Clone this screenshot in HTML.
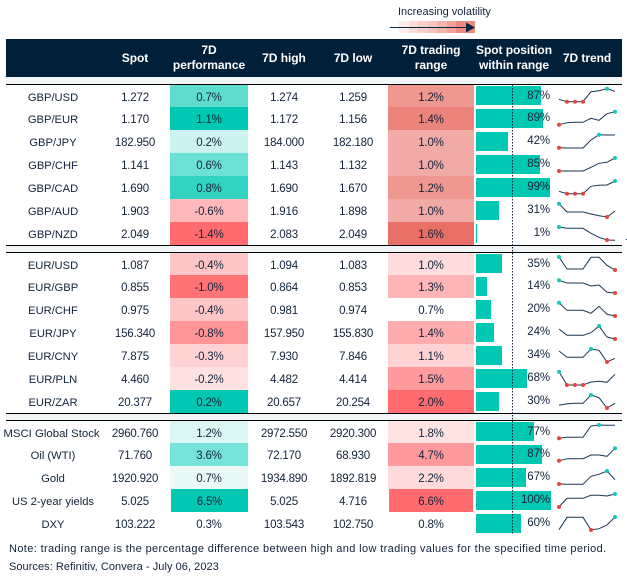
<!DOCTYPE html>
<html><head><meta charset="utf-8"><style>
html,body{margin:0;padding:0;background:#fff}
body{width:627px;height:576px;position:relative;overflow:hidden;font-family:"Liberation Sans",sans-serif;font-size:11.5px;letter-spacing:-.2px;color:#13233a}
.abs,.r,.r>*{position:absolute}
.r{left:0;width:627px;height:23px;line-height:27px}
.r.s{height:22px}
.r>*{top:0;height:100%;text-align:center}
.a{left:0;width:106px;font-size:11.2px;letter-spacing:0}
.b{left:100px;width:70px}
.c{left:170px;width:78px}
.d{left:248px;width:72px}
.e{left:318px;width:70px}
.f{left:388px;width:86px}
.r>.g{left:476px;top:2px;height:19px;background:#00c8b3}
.r.s>.g{top:1px}
.r>.h{left:500px;width:50px;text-align:right;line-height:23px;font-size:11.5px;letter-spacing:-.1px}
.r.s>.h{line-height:22px}
.hd{position:absolute;top:39px;height:38px;color:#fff;font-weight:bold;font-size:12px;letter-spacing:-.05px;line-height:15px;text-align:center;display:flex;align-items:center;justify-content:center}
.ln{position:absolute;left:6px;width:616px;height:1px;background:#000}
.st{position:absolute;left:6px;width:616px;background:#f2f5f6}
svg{position:absolute;left:0;top:0}
polyline{fill:none;stroke:#1a3550;stroke-width:1}
circle{stroke:none}
.rd{fill:#e8433f}.tl{fill:#14c8b8}
</style></head><body>
<div class="abs" style="left:398px;top:5px;font-size:11px;letter-spacing:0;line-height:15px;white-space:nowrap">Increasing volatility</div>
<div class="abs" style="left:399px;top:21px;width:76px;height:12px;background:linear-gradient(90deg,#fdeeec 0 13%,#fbdcd9 13% 25%,#f9cfcb 25% 38%,#f7c3be 38% 50%,#f4b3ac 50% 63%,#f1a29a 63% 75%,#ec8a80 75% 100%)"></div>

<div class="abs" style="left:6px;top:39px;width:616px;height:38px;background:#002039"></div>
<div class="hd" style="left:100px;width:70px">Spot</div>
<div class="hd" style="left:170px;width:78px">7D<br>performance</div>
<div class="hd" style="left:248px;width:72px">7D high</div>
<div class="hd" style="left:318px;width:70px">7D low</div>
<div class="hd" style="left:388px;width:86px">7D trading<br>range</div>
<div class="hd" style="left:474px;width:80px">Spot position<br>within range</div>
<div class="hd" style="left:556px;width:62px">7D trend</div>

<div class="st" style="top:77px;height:7px"></div><div class="ln" style="top:84px"></div>
<div class="ln" style="top:245px"></div><div class="st" style="top:246px;height:6px"></div><div class="ln" style="top:252px"></div>
<div class="ln" style="top:413px"></div><div class="st" style="top:414px;height:6px"></div><div class="ln" style="top:420px"></div>
<div class="abs" style="left:626px;top:239px;width:1px;height:1px;background:#13233a"></div>

<div class="r s" style="top:85px"><div class="a">GBP/USD</div><div class="b">1.272</div><div class="c" style="background:#5eddcf">0.7%</div><div class="d">1.274</div><div class="e">1.259</div><div class="f" style="background:#ee9890">1.2%</div><div class="g" style="width:65px"></div><div class="h">87%</div></div>
<div class="r" style="top:107px"><div class="a">GBP/EUR</div><div class="b">1.170</div><div class="c" style="background:#00c8b3">1.1%</div><div class="d">1.172</div><div class="e">1.156</div><div class="f" style="background:#ec837b">1.4%</div><div class="g" style="width:67px"></div><div class="h">89%</div></div>
<div class="r" style="top:130px"><div class="a">GBP/JPY</div><div class="b">182.950</div><div class="c" style="background:#ccf3ef">0.2%</div><div class="d">184.000</div><div class="e">182.180</div><div class="f" style="background:#f1aaa5">1.0%</div><div class="g" style="width:32px"></div><div class="h">42%</div></div>
<div class="r" style="top:153px"><div class="a">GBP/CHF</div><div class="b">1.141</div><div class="c" style="background:#6ce1d5">0.6%</div><div class="d">1.143</div><div class="e">1.132</div><div class="f" style="background:#f1aaa5">1.0%</div><div class="g" style="width:64px"></div><div class="h">85%</div></div>
<div class="r" style="top:176px"><div class="a">GBP/CAD</div><div class="b">1.690</div><div class="c" style="background:#33d3c2">0.8%</div><div class="d">1.690</div><div class="e">1.670</div><div class="f" style="background:#ee9890">1.2%</div><div class="g" style="width:74px"></div><div class="h">99%</div></div>
<div class="r" style="top:199px"><div class="a">GBP/AUD</div><div class="b">1.903</div><div class="c" style="background:#ffb9ba">-0.6%</div><div class="d">1.916</div><div class="e">1.898</div><div class="f" style="background:#f1aaa5">1.0%</div><div class="g" style="width:23px"></div><div class="h">31%</div></div>
<div class="r" style="top:222px"><div class="a">GBP/NZD</div><div class="b">2.049</div><div class="c" style="background:#ff6b6e">-1.4%</div><div class="d">2.083</div><div class="e">2.049</div><div class="f" style="background:#e76f65">1.6%</div><div class="g" style="width:1px"></div><div class="h">1%</div></div>

<div class="r s" style="top:253px"><div class="a">EUR/USD</div><div class="b">1.087</div><div class="c" style="background:#ffc6c7">-0.4%</div><div class="d">1.094</div><div class="e">1.083</div><div class="f" style="background:#ffdcdd">1.0%</div><div class="g" style="width:26px"></div><div class="h">35%</div></div>
<div class="r" style="top:275px"><div class="a">EUR/GBP</div><div class="b">0.855</div><div class="c" style="background:#ff7376">-1.0%</div><div class="d">0.864</div><div class="e">0.853</div><div class="f" style="background:#ffb4b6">1.3%</div><div class="g" style="width:11px"></div><div class="h">14%</div></div>
<div class="r" style="top:298px"><div class="a">EUR/CHF</div><div class="b">0.975</div><div class="c" style="background:#ffc6c7">-0.4%</div><div class="d">0.981</div><div class="e">0.974</div><div class="f">0.7%</div><div class="g" style="width:15px"></div><div class="h">20%</div></div>
<div class="r" style="top:321px"><div class="a">EUR/JPY</div><div class="b">156.340</div><div class="c" style="background:#ff9597">-0.8%</div><div class="d">157.950</div><div class="e">155.830</div><div class="f" style="background:#ffacae">1.4%</div><div class="g" style="width:18px"></div><div class="h">24%</div></div>
<div class="r" style="top:344px"><div class="a">EUR/CNY</div><div class="b">7.875</div><div class="c" style="background:#ffd3d4">-0.3%</div><div class="d">7.930</div><div class="e">7.846</div><div class="f" style="background:#ffd3d4">1.1%</div><div class="g" style="width:26px"></div><div class="h">34%</div></div>
<div class="r" style="top:367px"><div class="a">EUR/PLN</div><div class="b">4.460</div><div class="c" style="background:#ffe1e2">-0.2%</div><div class="d">4.482</div><div class="e">4.414</div><div class="f" style="background:#ff9b9d">1.5%</div><div class="g" style="width:51px"></div><div class="h">68%</div></div>
<div class="r" style="top:390px"><div class="a">EUR/ZAR</div><div class="b">20.377</div><div class="c" style="background:#00c8b3">0.2%</div><div class="d">20.657</div><div class="e">20.254</div><div class="f" style="background:#ff6b6e">2.0%</div><div class="g" style="width:23px"></div><div class="h">30%</div></div>

<div class="r s" style="top:421px"><div class="a" style="left:3px;width:97px;white-space:nowrap;font-size:11.4px">MSCI Global Stock</div><div class="b">2960.760</div><div class="c" style="background:#dcf6f3">1.2%</div><div class="d">2972.550</div><div class="e">2920.300</div><div class="f" style="background:#ffe3e3">1.8%</div><div class="g" style="width:58px"></div><div class="h">77%</div></div>
<div class="r" style="top:443px"><div class="a">Oil (WTI)</div><div class="b">71.760</div><div class="c" style="background:#76e3d8">3.6%</div><div class="d">72.170</div><div class="e">68.930</div><div class="f" style="background:#ff9a9c">4.7%</div><div class="g" style="width:66px"></div><div class="h">87%</div></div>
<div class="r" style="top:466px"><div class="a">Gold</div><div class="b">1920.920</div><div class="c" style="background:#ebfaf8">0.7%</div><div class="d">1934.890</div><div class="e">1892.819</div><div class="f" style="background:#ffdadb">2.2%</div><div class="g" style="width:50px"></div><div class="h">67%</div></div>
<div class="r" style="top:489px"><div class="a">US 2-year yields</div><div class="b">5.025</div><div class="c" style="left:171px;width:77px;background:#00c8b3">6.5%</div><div class="d">5.025</div><div class="e">4.716</div><div class="f" style="left:389px;width:84px;background:#ff6b6e">6.6%</div><div class="g" style="width:75px"></div><div class="h">100%</div></div>
<div class="r" style="top:512px"><div class="a">DXY</div><div class="b">103.222</div><div class="c">0.3%</div><div class="d">103.543</div><div class="e">102.750</div><div class="f">0.8%</div><div class="g" style="width:45px"></div><div class="h">60%</div></div>

<svg width="627" height="576" viewBox="0 0 627 576">
<line x1="512.5" y1="85" x2="512.5" y2="534" stroke="#13233a" stroke-width="1" stroke-dasharray="1.5 1.5"/>
<line x1="390" y1="27.5" x2="468" y2="27.5" stroke="#0a2540" stroke-width="1"/>
<path d="M466 22.5L475 27.5L466 32.5Z" fill="#0a2540"/>
<polyline points="559,99.3 567,101.7 575,101.7 583,101.7 591,91.7 599,90.7 607,88.7 615,91.3"/>
<circle class="rd" cx="567" cy="101.7" r="2"/><circle class="rd" cx="575" cy="101.7" r="2"/><circle class="rd" cx="583" cy="101.7" r="2"/><circle class="tl" cx="607" cy="88.7" r="2"/>
<polyline points="559,124.7 567,122.7 575,122.3 583,122.3 591,118.3 599,120.3 607,113.7 615,111.7"/>
<circle class="rd" cx="559" cy="124.7" r="2"/><circle class="tl" cx="615" cy="111.7" r="2"/>
<polyline points="559,147.7 567,148 575,148 583,148 591,140 599,134.7 607,135 615,135"/>
<circle class="rd" cx="559" cy="147.7" r="2"/><circle class="tl" cx="599" cy="134.7" r="2"/>
<polyline points="559,171 567,171 575,171 583,171 591,167.3 599,163.3 607,162.3 615,158"/>
<circle class="rd" cx="559" cy="171" r="2"/><circle class="tl" cx="615" cy="158" r="2"/>
<polyline points="559,191.3 567,193.7 575,193.7 583,193.7 591,186.3 599,185.3 607,185 615,181"/>
<circle class="rd" cx="567" cy="193.7" r="2"/><circle class="rd" cx="575" cy="193.7" r="2"/><circle class="rd" cx="583" cy="193.7" r="2"/><circle class="tl" cx="615" cy="181" r="2"/>
<polyline points="559,203.7 567,212 575,212 583,212 591,214 599,215.7 607,217 615,211"/>
<circle class="tl" cx="559" cy="203.7" r="2"/><circle class="rd" cx="607" cy="217" r="2"/>
<polyline points="559,227 567,228.3 575,228.3 583,228.3 591,233.3 599,237.3 607,240 615,240.3"/>
<circle class="tl" cx="559" cy="227" r="2"/><circle class="rd" cx="607" cy="240" r="2"/>
<polyline points="559,257 567,269 575,269 583,269 591,257.3 599,257.3 607,265.3 615,270"/>
<circle class="tl" cx="559" cy="257" r="2"/><circle class="rd" cx="615" cy="270" r="2"/>
<polyline points="559,280.3 567,283 575,283 583,283 591,286 599,285 607,292.3 615,293"/>
<circle class="tl" cx="559" cy="280.3" r="2"/><circle class="rd" cx="615" cy="293" r="2"/>
<polyline points="559,302.7 567,310.3 575,310.3 583,310.3 591,313.3 599,306.3 607,314.3 615,316"/>
<circle class="tl" cx="559" cy="302.7" r="2"/><circle class="rd" cx="615" cy="316" r="2"/>
<polyline points="559,329 567,335.3 575,335.3 583,335.3 591,332.7 599,326 607,337 615,339"/>
<circle class="tl" cx="599" cy="326" r="2"/><circle class="rd" cx="615" cy="339" r="2"/>
<polyline points="559,351 567,357.3 575,357.3 583,357.3 591,349 599,350.3 607,362 615,358.3"/>
<circle class="tl" cx="591" cy="349" r="2"/><circle class="rd" cx="607" cy="362" r="2"/>
<polyline points="559,371.7 567,385 575,385 583,385 591,382 599,381.3 607,382.3 615,374.3"/>
<circle class="tl" cx="559" cy="371.7" r="2"/><circle class="rd" cx="567" cy="385" r="2"/><circle class="rd" cx="575" cy="385" r="2"/><circle class="rd" cx="583" cy="385" r="2"/>
<polyline points="559,405.3 567,403.7 575,403.3 583,403.3 591,395 599,397.7 607,408 615,403.3"/>
<circle class="tl" cx="591" cy="395" r="2"/><circle class="rd" cx="607" cy="408" r="2"/>
<polyline points="559,438.3 567,437.3 575,437.3 583,437.3 591,426 599,425 607,425.3 615,425.3"/>
<circle class="rd" cx="559" cy="438.3" r="2"/><circle class="tl" cx="599" cy="425" r="2"/>
<polyline points="559,460.7 567,458.7 575,458.7 583,458.7 591,455 599,455 607,456.3 615,448.3"/>
<circle class="rd" cx="559" cy="460.7" r="2"/><circle class="tl" cx="615" cy="448.3" r="2"/>
<polyline points="559,484 567,484.3 575,484.3 583,484.3 591,476.3 599,474.3 607,471 615,479.7"/>
<circle class="rd" cx="559" cy="484" r="2"/><circle class="tl" cx="607" cy="471" r="2"/>
<polyline points="559,507 567,498.3 575,498.3 583,498.3 591,495.3 599,495.3 607,496 615,494"/>
<circle class="rd" cx="559" cy="507" r="2"/><circle class="tl" cx="615" cy="494" r="2"/>
<polyline points="559,529.7 567,517.3 575,517.3 583,517.3 591,530 599,528.7 607,525 615,517"/>
<circle class="rd" cx="591" cy="530" r="2"/><circle class="tl" cx="615" cy="517" r="2"/>
</svg>

<div class="abs" style="left:9px;top:541px;font-size:11px;line-height:16px;white-space:nowrap;letter-spacing:.37px">Note: trading range is the percentage difference between high and low trading values for the specified time period.</div>
<div class="abs" style="left:9px;top:559px;font-size:11px;line-height:16px;white-space:nowrap;letter-spacing:.05px">Sources: Refinitiv, Convera - July 06, 2023</div>
</body></html>
